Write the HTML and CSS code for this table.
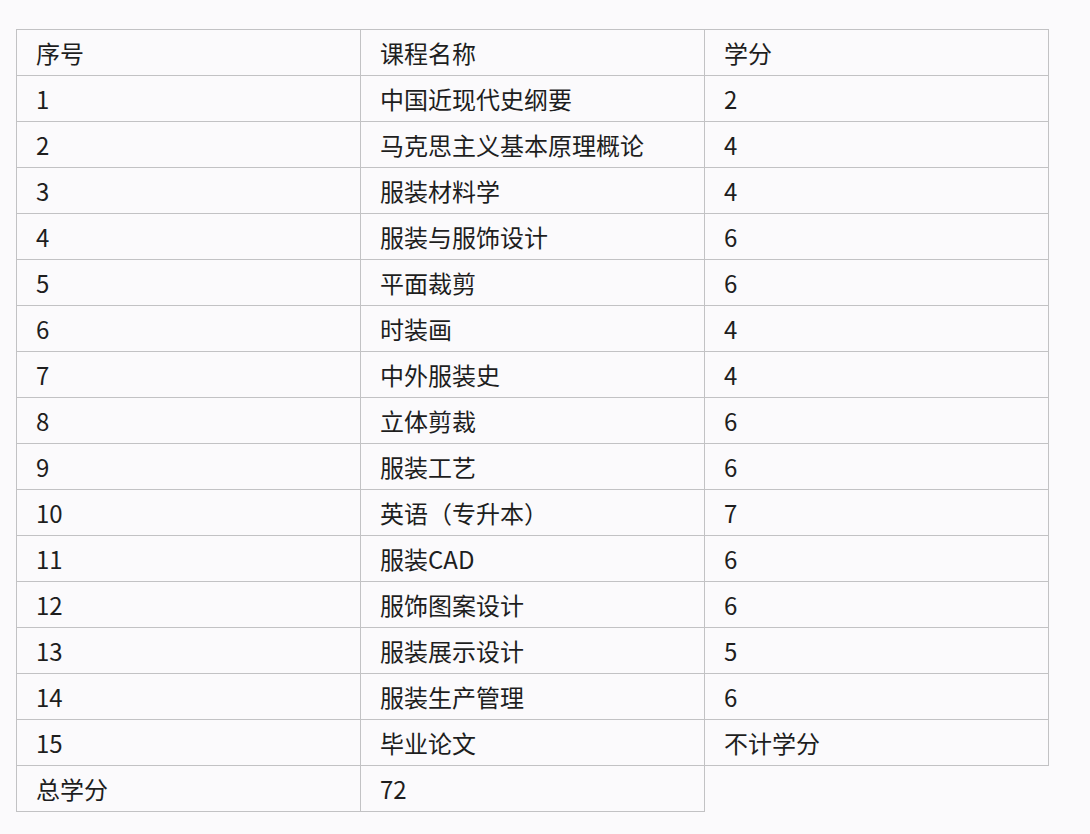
FILE: index.html
```html
<!DOCTYPE html>
<html lang="zh-CN">
<head>
<meta charset="utf-8">
<title>课程表</title>
<link rel="stylesheet" href="styles.css">
</head>
<body>
<table class="course-table">
  <tr><td>序号</td><td>课程名称</td><td>学分</td></tr>
  <tr><td>1</td><td>中国近现代史纲要</td><td>2</td></tr>
  <tr><td>2</td><td>马克思主义基本原理概论</td><td>4</td></tr>
  <tr><td>3</td><td>服装材料学</td><td>4</td></tr>
  <tr><td>4</td><td>服装与服饰设计</td><td>6</td></tr>
  <tr><td>5</td><td>平面裁剪</td><td>6</td></tr>
  <tr><td>6</td><td>时装画</td><td>4</td></tr>
  <tr><td>7</td><td>中外服装史</td><td>4</td></tr>
  <tr><td>8</td><td>立体剪裁</td><td>6</td></tr>
  <tr><td>9</td><td>服装工艺</td><td>6</td></tr>
  <tr><td>10</td><td>英语（专升本）</td><td>7</td></tr>
  <tr><td>11</td><td>服装CAD</td><td>6</td></tr>
  <tr><td>12</td><td>服饰图案设计</td><td>6</td></tr>
  <tr><td>13</td><td>服装展示设计</td><td>5</td></tr>
  <tr><td>14</td><td>服装生产管理</td><td>6</td></tr>
  <tr><td>15</td><td>毕业论文</td><td>不计学分</td></tr>
  <tr><td>总学分</td><td>72</td></tr>
</table>
</body>
</html>
```
FILE: styles.css
```css
html, body {
  margin: 0;
  padding: 0;
  background: #fbfafc;
}
body {
  padding: 29px 0 0 16px;
  font-family: "Noto Sans CJK SC", "Noto Sans", sans-serif;
  color: #1e1e1e;
}
.course-table {
  border-collapse: collapse;
  table-layout: fixed;
  width: 1033px;
}
.course-table td {
  width: 344px;
  height: 45px;
  padding: 0 0 0 19px;
  border: 1px solid #c2c2c4;
  font-size: 24px;
  line-height: 45px;
  box-sizing: border-box;
  vertical-align: middle;
  white-space: nowrap;
}
```
